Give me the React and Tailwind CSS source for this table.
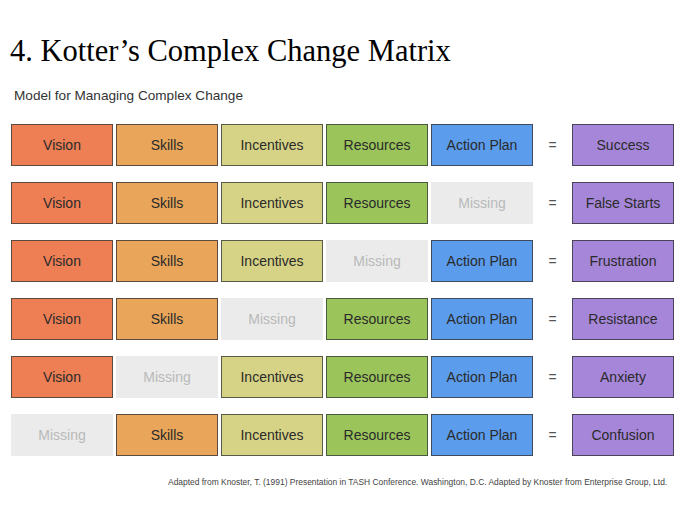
const C = {
  vision: "bg-[#ee7f55] border-[#5a4a40]",
  skills: "bg-[#e9a65a] border-[#5a4a40]",
  incentives: "bg-[#d6d286] border-[#5a5a48]",
  resources: "bg-[#9bc55b] border-[#4a5a40]",
  action: "bg-[#5b9cec] border-[#3f4a5a]",
  result: "bg-[#a686d8] border-[#4a4458]",
};

const LABELS = [
  ["vision", "Vision"],
  ["skills", "Skills"],
  ["incentives", "Incentives"],
  ["resources", "Resources"],
  ["action", "Action Plan"],
];

const ROWS = [
  { missing: -1, result: "Success" },
  { missing: 4, result: "False Starts" },
  { missing: 3, result: "Frustration" },
  { missing: 2, result: "Resistance" },
  { missing: 1, result: "Anxiety" },
  { missing: 0, result: "Confusion" },
];

function Cell({ kind, label, missing }) {
  if (missing) {
    return (
      <div className="w-[102px] h-[42px] flex items-center justify-center bg-[#ebebeb] text-[#b9b9b9] text-[14px]">
        Missing
      </div>
    );
  }
  return (
    <div
      className={`w-[102px] h-[42px] flex items-center justify-center border-[1.5px] text-[#2a2a2a] text-[14px] ${C[kind]}`}
    >
      {label}
    </div>
  );
}

export default function App() {
  return (
    <div
      className="w-[680px] h-[505px] bg-white relative overflow-hidden"
      style={{ fontFamily: "'Liberation Sans', Arial, sans-serif" }}
    >
      <h1 className="pl-[10px] pt-[33px] text-[30.5px] leading-[36px] text-black font-['Liberation_Serif',serif]">
        4. Kotter’s Complex Change Matrix
      </h1>
      <p className="pl-[14px] mt-[19px] text-[13.6px] leading-[16px] text-[#333]">
        Model for Managing Complex Change
      </p>

      <div className="pl-[11px] mt-[20px] flex flex-col gap-[16px]">
        {ROWS.map((row, i) => (
          <div key={i} className="flex items-center">
            <div className="flex gap-[3px]">
              {LABELS.map(([kind, label], j) => (
                <Cell key={kind} kind={kind} label={label} missing={row.missing === j} />
              ))}
            </div>
            <div className="w-[39px] text-center text-[14px] text-[#555]">=</div>
            <Cell kind="result" label={row.result} />
          </div>
        ))}
      </div>

      <p className="absolute left-[168px] top-[476px] text-[8.45px] leading-[12px] text-[#444] whitespace-nowrap">
        Adapted from Knoster, T. (1991) Presentation in TASH Conference. Washington, D.C. Adapted by Knoster from Enterprise Group, Ltd.
      </p>
    </div>
  );
}
